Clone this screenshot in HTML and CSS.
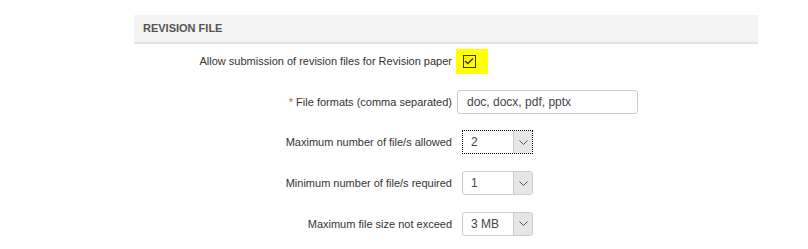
FILE: index.html
```html
<!DOCTYPE html>
<html lang="en">
  <head>
    <meta charset="UTF-8" />
    <title>Revision file</title>
    <link rel="stylesheet" href="styles.css">
  </head>
  <body>
    <section class="panel">
      <h2 class="panel-title">REVISION FILE</h2>
      <div class="form">
        <div class="row">
          <label class="label">Allow submission of revision files for Revision paper</label>
          <span class="check-mark">
            <span class="check-box">
              <svg width="10" height="8" viewBox="0 0 10 8"><path d="M1 4 L3.8 6.6 L9 1.4" fill="none" stroke="#333" stroke-width="1.4"/></svg>
            </span>
          </span>
        </div>
        <div class="row">
          <label class="label"><span class="req">*</span> File formats (comma separated)</label>
          <div class="text-input">doc, docx, pdf, pptx</div>
        </div>
        <div class="row">
          <label class="label">Maximum number of file/s allowed</label>
          <div class="select focused"><span class="value">2</span><span class="arrow"><svg width="9" height="5" viewBox="0 0 9 5"><path d="M0.5 0.5 L4.5 4.5 L8.5 0.5" fill="none" stroke="#555" stroke-width="1"/></svg></span></div>
        </div>
        <div class="row">
          <label class="label">Minimum number of file/s required</label>
          <div class="select"><span class="value">1</span><span class="arrow"><svg width="9" height="5" viewBox="0 0 9 5"><path d="M0.5 0.5 L4.5 4.5 L8.5 0.5" fill="none" stroke="#555" stroke-width="1"/></svg></span></div>
        </div>
        <div class="row">
          <label class="label">Maximum file size not exceed</label>
          <div class="select"><span class="value">3 MB</span><span class="arrow"><svg width="9" height="5" viewBox="0 0 9 5"><path d="M0.5 0.5 L4.5 4.5 L8.5 0.5" fill="none" stroke="#555" stroke-width="1"/></svg></span></div>
        </div>
      </div>
    </section>
  </body>
</html>
```

FILE: styles.css
```css
* {
  box-sizing: border-box;
  margin: 0;
  padding: 0;
}
body {
  background: #fff;
  font-family: "Liberation Sans", Arial, sans-serif;
  font-size: 11px;
  color: #333;
  padding: 15px 0 0 134px;
}
.panel {
  width: 624px;
}
.panel-title {
  background: #f3f3f3;
  border-bottom: 2px solid #e3e3e3;
  height: 29px;
  line-height: 27px;
  padding-left: 9px;
  font-size: 11px;
  font-weight: bold;
  color: #555;
}
.form {
  margin-top: -3px;
}
.row {
  display: flex;
  align-items: center;
  height: 40.6px;
}
.label {
  width: 318px;
  text-align: right;
}
.req {
  color: #e8553a;
}
.check-mark {
  display: flex;
  align-items: center;
  justify-content: center;
  margin-left: 4px;
  width: 32px;
  height: 25px;
  background: #ffff00;
}
.check-box {
  display: flex;
  align-items: center;
  justify-content: center;
  width: 13px;
  height: 13px;
  border: 1px solid #333;
  margin-left: -6px;
}
.text-input {
  margin-left: 5px;
  width: 181px;
  height: 24px;
  line-height: 22px;
  border: 1px solid #ccc;
  border-radius: 3px;
  padding-left: 9px;
  font-size: 12px;
  color: #444;
}
.select {
  display: flex;
  margin-left: 10px;
  width: 71px;
  height: 24px;
  border: 1px solid #ccc;
  border-radius: 3px;
  overflow: hidden;
}
.select.focused {
  border: 1px dotted #000;
  border-radius: 0;
}
.select .value {
  flex: 1;
  line-height: 22px;
  padding-left: 8px;
  font-size: 12px;
  color: #444;
}
.select .arrow {
  display: flex;
  align-items: center;
  justify-content: center;
  width: 19px;
  background: #e6e6e6;
  border-left: 1px solid #ccc;
}
```
